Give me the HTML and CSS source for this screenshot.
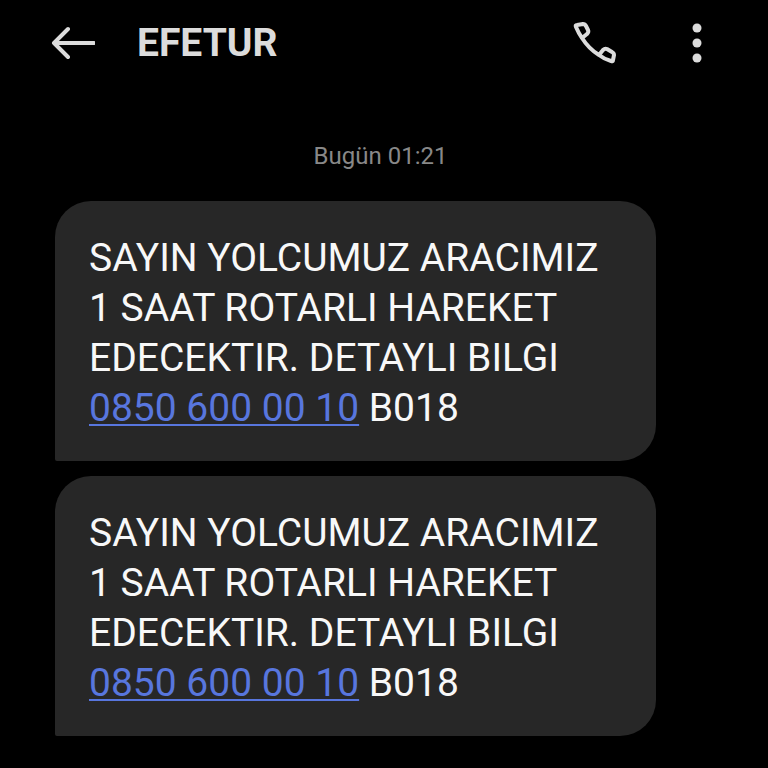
FILE: index.html
```
<!DOCTYPE html>
<html lang="tr">
<head>
    <meta charset="utf-8">
    <meta name="viewport" content="width=device-width, initial-scale=1">
    <title>EFETUR</title>
    <link rel="stylesheet" href="styles.css">
</head>
<body>
    <header class="top-bar">
        <button class="icon-button" type="button" aria-label="Geri">
            <svg width="44" height="36" viewBox="0 0 44 36">
                <path d="M43 18H3M17 4L3 18L17 32"/>
            </svg>
        </button>
        <h1 class="contact">EFETUR</h1>
        <button class="icon-button" type="button" aria-label="Ara">
            <svg width="44" height="44" viewBox="0 0 44 44">
                <path d="M9 17L14 13Q16 11 15 9L13 5Q12 3 10 3L4 4Q2 4 3 6Q6 13 9 17Q16 28 26 34Q31 38 38 40Q40 41 40 39L41 34Q41 32 39 31L34 28Q32 27 30 29L26 34"/>
            </svg>
        </button>
        <button class="icon-button menu-button" type="button" aria-label="Menü">
            <svg class="dots" width="10" height="40" viewBox="0 0 10 40">
                <circle cx="5" cy="5" r="4.5"/>
                <circle cx="5" cy="20" r="4.5"/>
                <circle cx="5" cy="35" r="4.5"/>
            </svg>
        </button>
    </header>
    <main class="messages">
        <time class="date">Bugün 01:21</time>
        <p class="message">SAYIN YOLCUMUZ ARACIMIZ 1 SAAT ROTARLI HAREKET EDECEKTIR. DETAYLI BILGI <a href="tel:08506000010">0850 600 00 10</a> B018</p>
        <p class="message">SAYIN YOLCUMUZ ARACIMIZ 1 SAAT ROTARLI HAREKET EDECEKTIR. DETAYLI BILGI <a href="tel:08506000010">0850 600 00 10</a> B018</p>
    </main>
</body>
</html>
```

FILE: styles.css
```
body {
    margin: 0;
    background-color: #000;
    color: #f8f8f8;
    font-family: Roboto, sans-serif;
}

.top-bar {
    display: flex;
    align-items: center;
    height: 86px;
    padding: 0 66px 0 51px;
}

.icon-button {
    display: flex;
    padding: 0;
    border: 0;
    background: none;
    color: #dcdcdc;
    cursor: pointer;
}

.icon-button svg {
    fill: none;
    stroke: currentColor;
    stroke-width: 4;
    stroke-linecap: round;
    stroke-linejoin: round;
}

.icon-button .dots {
    fill: currentColor;
    stroke: none;
}

.menu-button {
    margin-left: 75px;
}

.contact {
    flex: 1;
    margin: 0 0 0 42px;
    color: #dcdcdc;
    font-size: 39px;
    font-weight: 700;
}

.messages {
    display: flex;
    flex-direction: column;
    gap: 15px;
    padding: 55px 112px 31px 55px;
}

.date {
    margin: 0 0 15px 50px;
    color: #888;
    font-size: 24px;
    line-height: 30px;
    text-align: center;
}

.message {
    margin: 0;
    padding: 32px 34px 28px;
    border-radius: 36px 36px 36px 2px;
    background-color: #272727;
    font-size: 39px;
    line-height: 50px;
}

.message a {
    color: #5876de;
    text-decoration-thickness: 2px;
    text-decoration-skip-ink: none;
    text-underline-offset: 3px;
}
```
